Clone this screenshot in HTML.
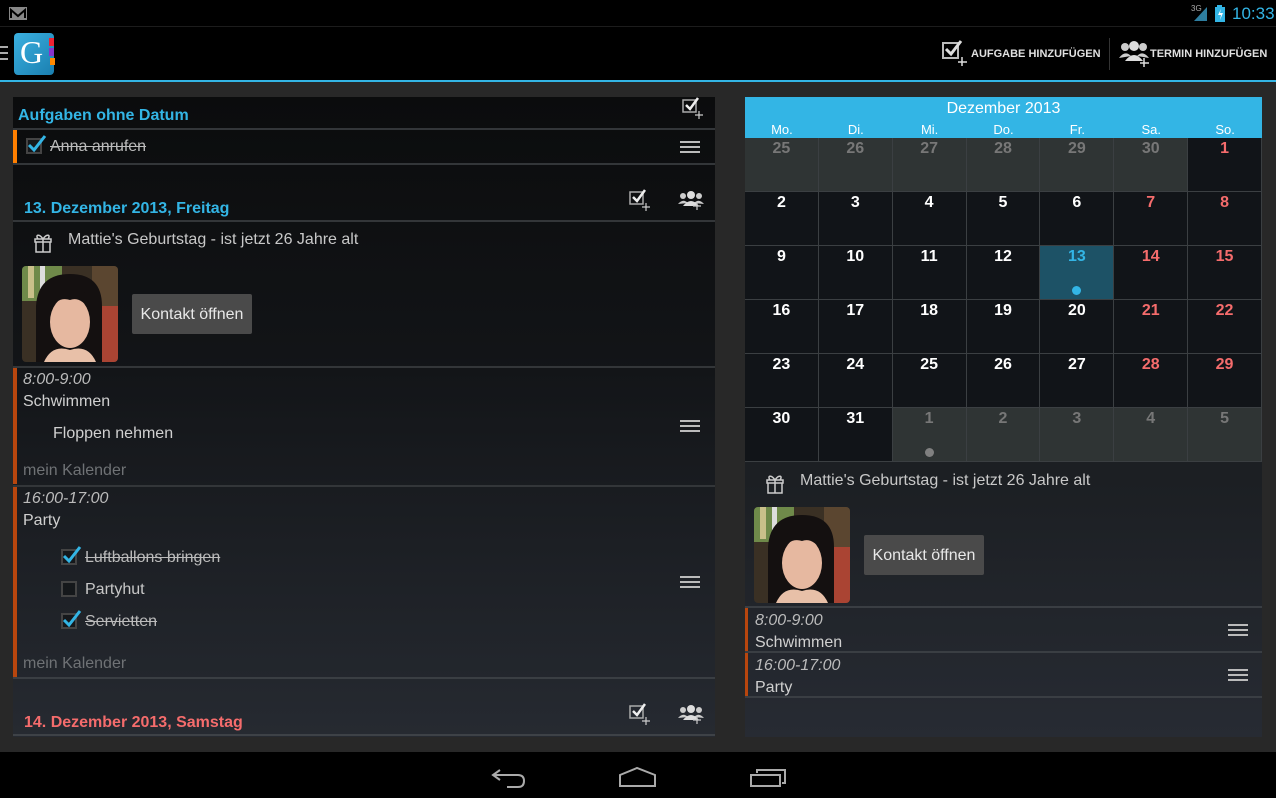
<!DOCTYPE html>
<html><head><meta charset="utf-8"><style>
*{margin:0;padding:0;box-sizing:border-box}
body{width:1276px;height:798px;background:#282828;font-family:"Liberation Sans",sans-serif;position:relative;overflow:hidden;color:#cfcfcf}
.a{position:absolute}
.t{position:absolute;white-space:nowrap;font-size:16px;color:#d0d0d0;margin-top:2px}
.hl{position:absolute;height:2px;background:#333639}
.cb{position:absolute;width:16px;height:16px;border:2px solid #444;background:#15181b}
.s{text-decoration:line-through}
.cal{position:absolute;left:745px;top:138px;width:517px;height:324px;display:grid;grid-template-columns:repeat(7,1fr);grid-template-rows:repeat(6,54px);gap:0;background:#3b3f42}
.cal div{background:#111418;border-right:1px solid #3b3f42;border-bottom:1px solid #3b3f42;text-align:center;font-weight:bold;font-size:16px;color:#fff;padding-top:2px;position:relative}
.cal .o{background:#2f3434;color:#777}
.cal .r{color:#f56c6c}
.btn{position:absolute;width:120px;height:40px;background:#4a4a4a;color:#e8e8e8;font-size:16px;text-align:center;line-height:42px;border-radius:2px}
.bar{position:absolute;width:4px;background:#b8460e}
</style></head><body>
<div class="a" style="left:0;top:0;width:1276px;height:26px;background:#000"></div>
<div class="a" style="left:0;top:26px;width:1276px;height:1px;background:#1c1c1c"></div>
<svg class="a" style="left:9px;top:7px" width="18" height="13"><rect x="0" y="0" width="18" height="13" fill="#888"/><path d="M2 11V3l7 6 7-6v8" stroke="#000" stroke-width="2" fill="none"/></svg>
<div class="t" style="left:1191px;top:2px;font-size:8px;color:#aaa">3G</div>
<svg class="a" style="left:1193px;top:6px" width="15" height="15"><path d="M14 1V15H1Z" fill="#2e7ea0"/></svg>
<svg class="a" style="left:1215px;top:5px" width="10" height="17"><rect x="2" y="0" width="5" height="2" fill="#33b5e5"/><rect x="0" y="2" width="10" height="15" fill="#33b5e5"/><path d="M6 4 3 10h3l-1 5 3-7H5z" fill="#fff"/></svg>
<div class="t" style="left:1232px;top:2px;font-size:17px;color:#33b5e5">10:33</div>
<div class="a" style="left:0;top:27px;width:1276px;height:53px;background:#000"></div>
<div class="a" style="left:0;top:80px;width:1276px;height:2px;background:#33b5e5"></div>
<div class="a" style="left:0;top:46px;width:8px;height:2px;background:#aaa"></div>
<div class="a" style="left:0;top:52px;width:8px;height:2px;background:#aaa"></div>
<div class="a" style="left:0;top:58px;width:8px;height:2px;background:#aaa"></div>
<div class="a" style="left:14px;top:33px;width:40px;height:42px;background:linear-gradient(135deg,#3bb0e0,#1a7fb0);border-radius:4px"></div>
<div class="a" style="left:49px;top:38px;width:5px;height:8px;background:#e23"></div>
<div class="a" style="left:49px;top:48px;width:5px;height:8px;background:#83c"></div>
<div class="a" style="left:50px;top:58px;width:5px;height:7px;background:#f80"></div>
<div class="t" style="left:20px;top:32px;font-family:'Liberation Serif',serif;font-size:32px;color:#fff">G</div>
<svg class="a" style="left:941px;top:39px" width="30" height="28"><rect x="2" y="4" width="15" height="15" fill="none" stroke="#bbb" stroke-width="2"/><path d="M5 10l5 5 10-13" stroke="#ddd" stroke-width="3" fill="none"/><path d="M21 18v9M17 23h9" stroke="#ddd" stroke-width="1.5"/></svg>
<div class="t" style="left:971px;top:46px;font-size:11px;font-weight:bold;color:#e0e0e0">AUFGABE HINZUFÜGEN</div>
<div class="a" style="left:1109px;top:38px;width:1px;height:32px;background:#333"></div>
<svg class="a" style="left:1118px;top:39px" width="32" height="28"><circle cx="7" cy="8" r="4" fill="#ccc"/><circle cx="25" cy="8" r="4" fill="#ccc"/><circle cx="16" cy="7" r="5" fill="#ddd"/><path d="M1 19q6-8 12-2M19 17q6-6 12 2" fill="#ccc"/><path d="M7 22q9-12 18 0z" fill="#ddd"/><path d="M26 19v9M22 24h9" stroke="#ddd" stroke-width="1.5"/></svg>
<div class="t" style="left:1150px;top:46px;font-size:11px;font-weight:bold;color:#e0e0e0">TERMIN HINZUFÜGEN</div>

<div class="a" style="left:13px;top:97px;width:702px;height:640px;background:linear-gradient(#0b0c0d 0%,#121417 40%,#262a31 100%)"></div>
<div class="t" style="left:18px;top:105px;font-weight:bold;color:#33b5e5">Aufgaben ohne Datum</div>
<svg class="a" style="left:682px;top:97px" width="24" height="22"><rect x="1" y="3" width="13" height="12" fill="none" stroke="#aaa" stroke-width="1.5"/><path d="M4 8l4 4 8-11" stroke="#eee" stroke-width="2.5" fill="none"/><path d="M17 14v8M13 18h8" stroke="#ccc" stroke-width="1.2"/></svg>
<div class="hl" style="left:13px;top:128px;width:702px"></div>
<div class="a" style="left:13px;top:130px;width:4px;height:33px;background:#ff7f00"></div>
<div class="cb" style="left:26px;top:138px"></div>
<svg class="a" style="left:27px;top:134px" width="22" height="20"><path d="M2 11l5 5 11-14" stroke="#33b5e5" stroke-width="3" fill="none"/></svg>
<div class="t s" style="left:50px;top:136px;color:#bbb">Anna anrufen</div>
<div class="a" style="left:680px;top:141px;width:20px;height:2px;background:#bbb;box-shadow:0 5px 0 #bbb,0 10px 0 #bbb"></div>
<div class="hl" style="left:13px;top:163px;width:702px"></div>

<div class="t" style="left:24px;top:198px;font-weight:bold;color:#33b5e5">13. Dezember 2013, Freitag</div>
<svg class="a" style="left:629px;top:189px" width="24" height="22"><rect x="1" y="3" width="13" height="12" fill="none" stroke="#aaa" stroke-width="1.5"/><path d="M4 8l4 4 8-11" stroke="#eee" stroke-width="2.5" fill="none"/><path d="M17 14v8M13 18h8" stroke="#ccc" stroke-width="1.2"/></svg>
<svg class="a" style="left:678px;top:189px" width="26" height="22"><circle cx="5" cy="7" r="3" fill="#ccc"/><circle cx="21" cy="7" r="3" fill="#ccc"/><circle cx="13" cy="6" r="4" fill="#ddd"/><path d="M0 15q5-6 10-1M16 14q5-5 10 1" fill="#ccc"/><path d="M5 17q8-10 16 0z" fill="#ddd"/><path d="M19 13v8M15 17h8" stroke="#ccc" stroke-width="1.2"/></svg>
<div class="hl" style="left:13px;top:220px;width:702px"></div>
<svg class="a" style="left:32px;top:231px" width="22" height="22"><path d="M3 8h16v3H3zM4 11h14v10H4zM11 8v13M11 8C7 2 3 4 6 8M11 8c4-6 8-4 5 0" fill="none" stroke="#ccc" stroke-width="1.5"/></svg>
<div class="t" style="left:68px;top:229px;color:#c8c8c8">Mattie's Geburtstag - ist jetzt 26 Jahre alt</div>
<svg class="a" style="left:22px;top:266px" width="96" height="96"><defs><clipPath id="c1"><rect width="96" height="96" rx="4"/></clipPath></defs><g clip-path="url(#c1)"><rect width="96" height="96" fill="#3a3024"/><rect x="0" y="0" width="40" height="35" fill="#6f8a4a"/><rect x="6" y="0" width="6" height="32" fill="#c9c08a"/><rect x="18" y="0" width="5" height="30" fill="#ddd"/><rect x="70" y="0" width="26" height="40" fill="#5b4630"/><rect x="75" y="40" width="21" height="56" fill="#a43"/><path d="M14 96V40Q16 8 48 8Q80 8 80 40V96Z" fill="#141010"/><ellipse cx="48" cy="56" rx="20" ry="26" fill="#e6b8a0"/><path d="M28 44Q30 20 48 20Q66 20 68 44Q58 30 48 34Q36 30 28 44Z" fill="#141010"/><path d="M22 96Q30 78 48 84Q66 78 74 96Z" fill="#e8c0a8"/></g></svg>
<div class="btn" style="left:132px;top:294px">Kontakt öffnen</div>
<div class="hl" style="left:13px;top:366px;width:702px"></div>
<div class="bar" style="left:13px;top:368px;height:116px"></div>
<div class="t" style="left:23px;top:369px;font-style:italic;color:#bbb">8:00-9:00</div>
<div class="t" style="left:23px;top:391px">Schwimmen</div>
<div class="t" style="left:53px;top:423px">Floppen nehmen</div>
<div class="t" style="left:23px;top:460px;color:#6f7275">mein Kalender</div>
<div class="a" style="left:680px;top:420px;width:20px;height:2px;background:#bbb;box-shadow:0 5px 0 #bbb,0 10px 0 #bbb"></div>
<div class="hl" style="left:13px;top:485px;width:702px"></div>
<div class="bar" style="left:13px;top:487px;height:190px"></div>
<div class="t" style="left:23px;top:488px;font-style:italic;color:#bbb">16:00-17:00</div>
<div class="t" style="left:23px;top:510px">Party</div>
<div class="cb" style="left:61px;top:549px"></div>
<svg class="a" style="left:62px;top:545px" width="22" height="20"><path d="M2 11l5 5 11-14" stroke="#33b5e5" stroke-width="3" fill="none"/></svg>
<div class="t s" style="left:85px;top:547px;color:#bbb">Luftballons bringen</div>
<div class="cb" style="left:61px;top:581px"></div>
<div class="t" style="left:85px;top:579px;color:#c8c8c8">Partyhut</div>
<div class="cb" style="left:61px;top:613px"></div>
<svg class="a" style="left:62px;top:609px" width="22" height="20"><path d="M2 11l5 5 11-14" stroke="#33b5e5" stroke-width="3" fill="none"/></svg>
<div class="t s" style="left:85px;top:611px;color:#bbb">Servietten</div>
<div class="t" style="left:23px;top:653px;color:#6f7275">mein Kalender</div>
<div class="a" style="left:680px;top:576px;width:20px;height:2px;background:#bbb;box-shadow:0 5px 0 #bbb,0 10px 0 #bbb"></div>
<div class="hl" style="left:13px;top:677px;width:702px;background:#3a3e43"></div>
<div class="t" style="left:24px;top:712px;font-weight:bold;color:#f56c6c">14. Dezember 2013, Samstag</div>
<svg class="a" style="left:629px;top:703px" width="24" height="22"><rect x="1" y="3" width="13" height="12" fill="none" stroke="#aaa" stroke-width="1.5"/><path d="M4 8l4 4 8-11" stroke="#eee" stroke-width="2.5" fill="none"/><path d="M17 14v8M13 18h8" stroke="#ccc" stroke-width="1.2"/></svg>
<svg class="a" style="left:678px;top:703px" width="26" height="22"><circle cx="5" cy="7" r="3" fill="#ccc"/><circle cx="21" cy="7" r="3" fill="#ccc"/><circle cx="13" cy="6" r="4" fill="#ddd"/><path d="M0 15q5-6 10-1M16 14q5-5 10 1" fill="#ccc"/><path d="M5 17q8-10 16 0z" fill="#ddd"/><path d="M19 13v8M15 17h8" stroke="#ccc" stroke-width="1.2"/></svg>
<div class="hl" style="left:13px;top:734px;width:702px;background:#3e4247"></div>

<div class="a" style="left:745px;top:97px;width:517px;height:640px;background:linear-gradient(#1a1d20 0%,#1c1f23 60%,#272b33 100%)"></div>
<div class="a" style="left:745px;top:97px;width:517px;height:41px;background:#33b5e5"></div>
<div class="t" style="left:745px;top:98px;width:517px;text-align:center;color:#fff">Dezember 2013</div>
<div class="a" style="left:745px;top:122px;width:517px;display:flex;font-size:13px;color:#fff">
<span style="flex:1;text-align:center">Mo.</span><span style="flex:1;text-align:center">Di.</span><span style="flex:1;text-align:center">Mi.</span><span style="flex:1;text-align:center">Do.</span><span style="flex:1;text-align:center">Fr.</span><span style="flex:1;text-align:center">Sa.</span><span style="flex:1;text-align:center">So.</span></div>
<div class="cal">
<div class="o">25</div><div class="o">26</div><div class="o">27</div><div class="o">28</div><div class="o">29</div><div class="o">30</div><div class="r">1</div>
<div>2</div><div>3</div><div>4</div><div>5</div><div>6</div><div class="r">7</div><div class="r">8</div>
<div>9</div><div>10</div><div>11</div><div>12</div><div style="background:#1d5266;color:#33b5e5">13<span style="position:absolute;left:32px;top:40px;width:9px;height:9px;border-radius:50%;background:#33b5e5"></span></div><div class="r">14</div><div class="r">15</div>
<div>16</div><div>17</div><div>18</div><div>19</div><div>20</div><div class="r">21</div><div class="r">22</div>
<div>23</div><div>24</div><div>25</div><div>26</div><div>27</div><div class="r">28</div><div class="r">29</div>
<div>30</div><div>31</div><div class="o">1<span style="position:absolute;left:32px;top:40px;width:9px;height:9px;border-radius:50%;background:#808080"></span></div><div class="o">2</div><div class="o">3</div><div class="o">4</div><div class="o">5</div>
</div>
<svg class="a" style="left:764px;top:472px" width="22" height="22"><path d="M3 8h16v3H3zM4 11h14v10H4zM11 8v13M11 8C7 2 3 4 6 8M11 8c4-6 8-4 5 0" fill="none" stroke="#ccc" stroke-width="1.5"/></svg>
<div class="t" style="left:800px;top:470px;color:#c8c8c8">Mattie's Geburtstag - ist jetzt 26 Jahre alt</div>
<svg class="a" style="left:754px;top:507px" width="96" height="96"><defs><clipPath id="c2"><rect width="96" height="96" rx="4"/></clipPath></defs><g clip-path="url(#c2)"><rect width="96" height="96" fill="#3a3024"/><rect x="0" y="0" width="40" height="35" fill="#6f8a4a"/><rect x="6" y="0" width="6" height="32" fill="#c9c08a"/><rect x="18" y="0" width="5" height="30" fill="#ddd"/><rect x="70" y="0" width="26" height="40" fill="#5b4630"/><rect x="75" y="40" width="21" height="56" fill="#a43"/><path d="M14 96V40Q16 8 48 8Q80 8 80 40V96Z" fill="#141010"/><ellipse cx="48" cy="56" rx="20" ry="26" fill="#e6b8a0"/><path d="M28 44Q30 20 48 20Q66 20 68 44Q58 30 48 34Q36 30 28 44Z" fill="#141010"/><path d="M22 96Q30 78 48 84Q66 78 74 96Z" fill="#e8c0a8"/></g></svg>
<div class="btn" style="left:864px;top:535px">Kontakt öffnen</div>
<div class="hl" style="left:745px;top:606px;width:517px;background:#3a3e43"></div>
<div class="bar" style="left:745px;top:608px;height:44px;width:3px"></div>
<div class="t" style="left:755px;top:610px;font-style:italic;color:#bbb">8:00-9:00</div>
<div class="t" style="left:755px;top:632px">Schwimmen</div>
<div class="a" style="left:1228px;top:624px;width:20px;height:2px;background:#bbb;box-shadow:0 5px 0 #bbb,0 10px 0 #bbb"></div>
<div class="hl" style="left:745px;top:651px;width:517px;background:#3a3e43"></div>
<div class="bar" style="left:745px;top:653px;height:44px;width:3px"></div>
<div class="t" style="left:755px;top:655px;font-style:italic;color:#bbb">16:00-17:00</div>
<div class="t" style="left:755px;top:677px">Party</div>
<div class="a" style="left:1228px;top:669px;width:20px;height:2px;background:#bbb;box-shadow:0 5px 0 #bbb,0 10px 0 #bbb"></div>
<div class="hl" style="left:745px;top:696px;width:517px;background:#3a3e43"></div>

<div class="a" style="left:0;top:752px;width:1276px;height:46px;background:#000"></div>
<svg class="a" style="left:490px;top:765px" width="40" height="24"><path d="M10 5 3 10l7 5M3 10h25q6 0 6 6t-6 6H17" fill="none" stroke="#aaa" stroke-width="2"/></svg>
<svg class="a" style="left:618px;top:766px" width="40" height="22"><path d="M2 20V9L19 2l18 7v11z" fill="none" stroke="#aaa" stroke-width="2"/></svg>
<svg class="a" style="left:748px;top:768px" width="40" height="20"><rect x="3" y="7" width="29" height="11" fill="none" stroke="#aaa" stroke-width="2"/><path d="M9 5V2h28v13h-3" fill="none" stroke="#aaa" stroke-width="2"/></svg>
</body></html>
